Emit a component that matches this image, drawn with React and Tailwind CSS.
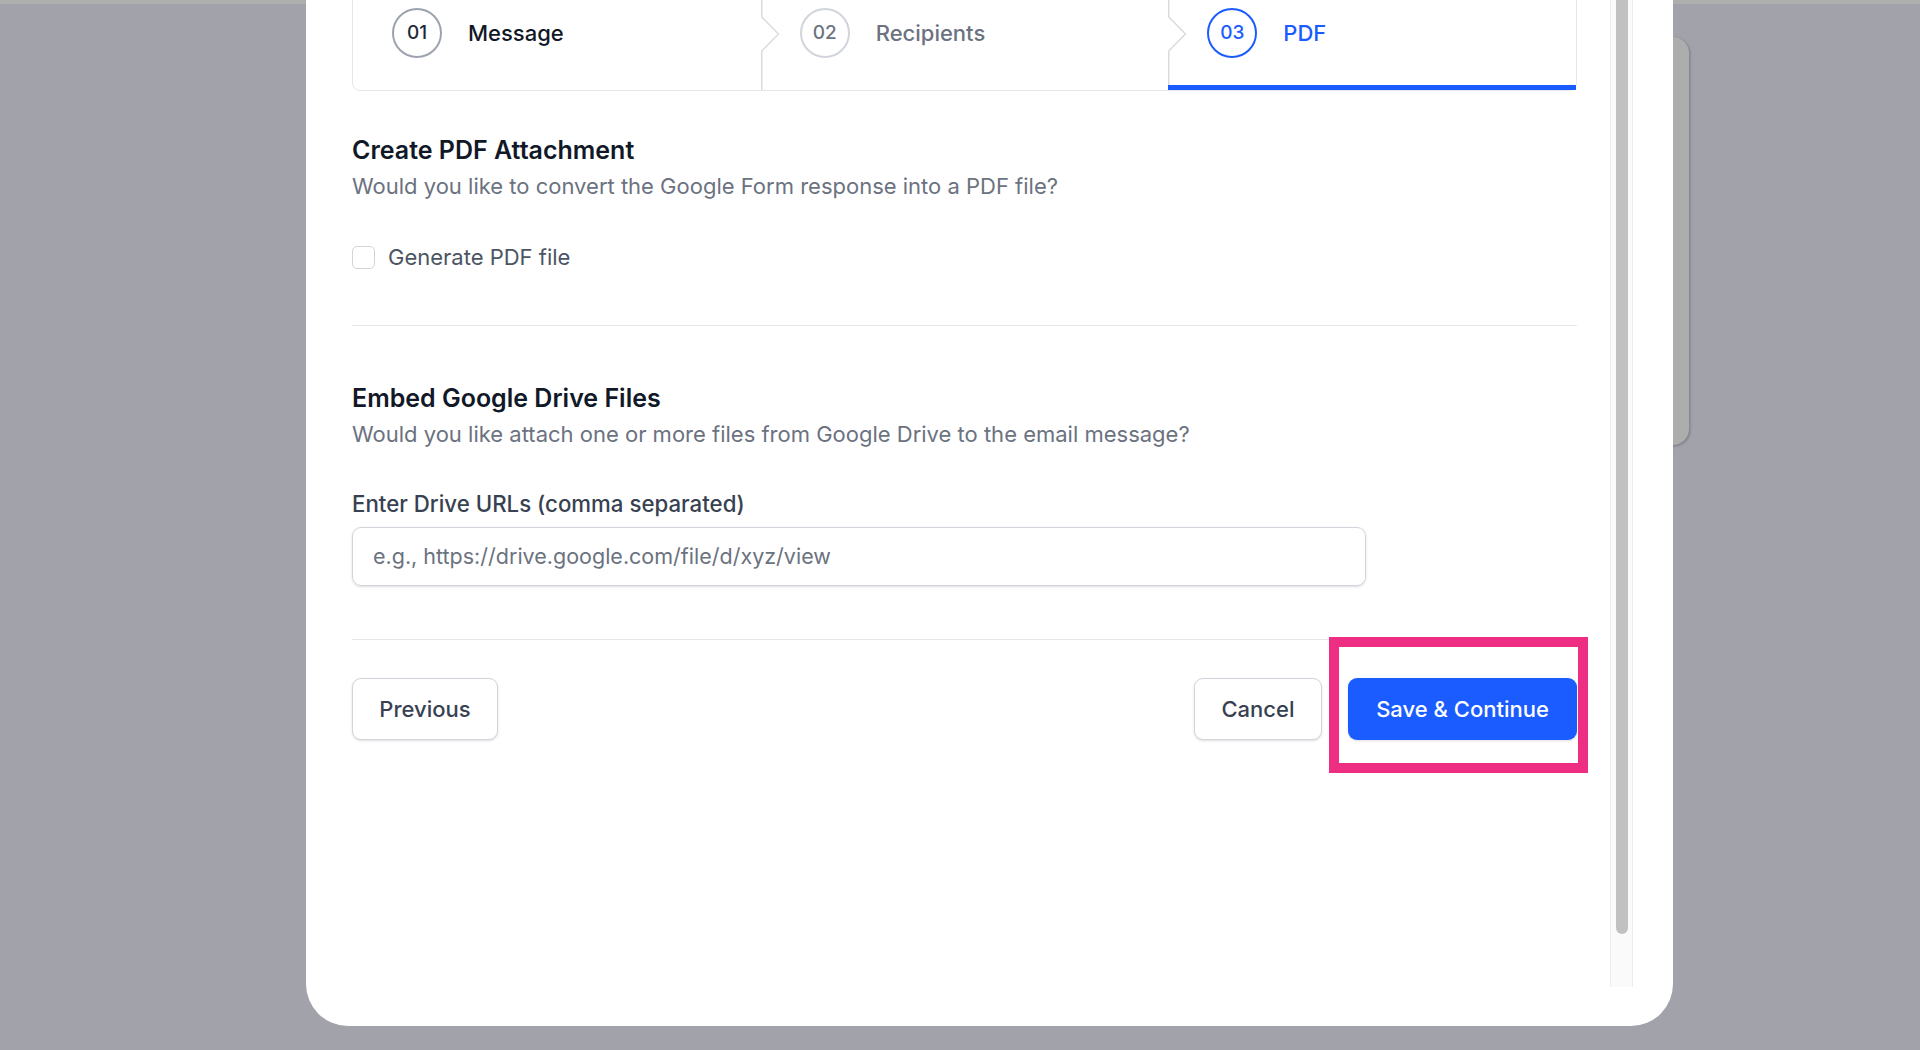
const STEPS = [
  { num: "01", label: "Message", state: "done" },
  { num: "02", label: "Recipients", state: "upcoming" },
  { num: "03", label: "PDF", state: "current" },
];

const circleStyles = {
  done: "border-[#9ca3af] text-[#1f2937]",
  upcoming: "border-[#d1d5db] text-[#6b7280]",
  current: "border-[#1a5cff] text-[#1a5cff]",
};

const labelStyles = {
  done: "text-[#111827]",
  upcoming: "text-[#6b7280]",
  current: "text-[#1a5cff]",
};

function Chevron() {
  return (
    <svg
      className="absolute left-0 top-0 h-[103px] w-[20px] text-[#d9dbe0]"
      viewBox="0 0 20 103"
      fill="none"
      aria-hidden="true"
    >
      <path
        d="M0.75 0 V30 L17.5 47 L0.75 64 V103"
        stroke="currentColor"
        strokeWidth="1.5"
        strokeLinejoin="round"
      />
    </svg>
  );
}

function Steps() {
  return (
    <nav className="-mt-[14px] flex rounded-[8px] border border-[#e5e7eb]">
      {STEPS.map((step, i) => (
        <div key={step.num} className="relative flex h-[103px] flex-1 items-start pl-[39px] pt-[21px]">
          {i > 0 && <Chevron />}
          <div className="flex items-center gap-[26px]">
            <span
              className={`flex h-[50px] w-[50px] items-center justify-center rounded-full border-[2.5px] text-[19px] font-medium ${circleStyles[step.state]}`}
            >
              {step.num}
            </span>
            <span className={`text-[22px] font-medium ${labelStyles[step.state]}`}>{step.label}</span>
          </div>
          {step.state === "current" && <span className="absolute inset-x-0 bottom-0 h-[5px] bg-[#1a5cff]" />}
        </div>
      ))}
    </nav>
  );
}

function SectionHead({ title, text }) {
  return (
    <div>
      <h3 className="text-[25px] font-semibold leading-[33px] text-[#111827]">{title}</h3>
      <p className="mt-[3px] text-[22px] leading-[33px] text-[#6b7280]">{text}</p>
    </div>
  );
}

export default function App() {
  return (
    <div
      className="relative h-[1050px] w-[1920px] overflow-hidden bg-[#a2a2ab]"
      style={{ fontFamily: "Inter, 'Noto Sans', sans-serif" }}
    >
      {/* page behind the overlay */}
      <div className="absolute inset-x-0 top-0 h-[4px] bg-[#aeaeae]" />
      <div className="absolute left-[1560px] top-[37px] h-[408px] w-[129px] rounded-r-[16px] bg-[#adadad] shadow-[1px_1px_3px_rgba(0,0,0,0.25)]" />

      {/* modal */}
      <div className="relative z-10 ml-[306px] flex h-[1026px] w-[1367px] flex-col rounded-b-[42px] bg-white pb-[39px] pr-[40px]">
        <div className="flex min-h-0 flex-1">
          <div className="min-w-0 flex-1 overflow-hidden pl-[46px] pr-[33px]">
            <Steps />

            <div className="mt-[43px]">
              <SectionHead
                title="Create PDF Attachment"
                text="Would you like to convert the Google Form response into a PDF file?"
              />
              <label className="mt-[38px] flex items-center gap-[13px]">
                <span className="h-[23px] w-[23px] rounded-[5px] border-[1.5px] border-[#d1d5db] bg-white" />
                <span className="text-[22px] leading-[33px] text-[#4b5563]">Generate PDF file</span>
              </label>
            </div>

            <div className="mt-[51px] h-px bg-[#e5e7eb]" />

            <div className="mt-[56px]">
              <SectionHead
                title="Embed Google Drive Files"
                text="Would you like attach one or more files from Google Drive to the email message?"
              />
              <div className="mt-[36px] text-[22.25px] font-medium leading-[33px] text-[#374151]">
                Enter Drive URLs (comma separated)
              </div>
              <div className="mt-[7px] flex h-[59px] w-[1014px] items-center rounded-[9px] border-[1.5px] border-[#d1d5db] px-[20px] shadow-sm">
                <span className="text-[21.5px] text-[#6b7280]">e.g., https://drive.google.com/file/d/xyz/view</span>
              </div>
            </div>

            <div className="mt-[53px] h-px bg-[#e5e7eb]" />

            <div className="mt-[38px] flex items-center">
              <button className="flex h-[62px] w-[146px] items-center justify-center rounded-[9px] border-[1.5px] border-[#d1d5db] bg-white text-[22px] font-medium text-[#374151] shadow-sm">
                Previous
              </button>
              <div className="ml-auto flex gap-[26px]">
                <button className="flex h-[62px] w-[128px] items-center justify-center rounded-[9px] border-[1.5px] border-[#d1d5db] bg-white text-[22px] font-medium text-[#374151] shadow-sm">
                  Cancel
                </button>
                <button className="flex h-[62px] w-[229px] items-center justify-center rounded-[9px] bg-[#1a5cff] text-[22px] font-medium text-white shadow-sm">
                  Save &amp; Continue
                </button>
              </div>
            </div>
          </div>

          {/* scrollbar */}
          <div className="flex w-[23px] justify-center border-x border-[#ececec] bg-[#fafafa]">
            <div className="h-[934px] w-[12px] rounded-b-full bg-[#c1c1c1]" />
          </div>
        </div>
      </div>

      {/* highlight annotation */}
      <div className="absolute left-[1329px] top-[637px] z-20 h-[136px] w-[259px] border-[10px] border-[#ee2e83]" />
    </div>
  );
}
